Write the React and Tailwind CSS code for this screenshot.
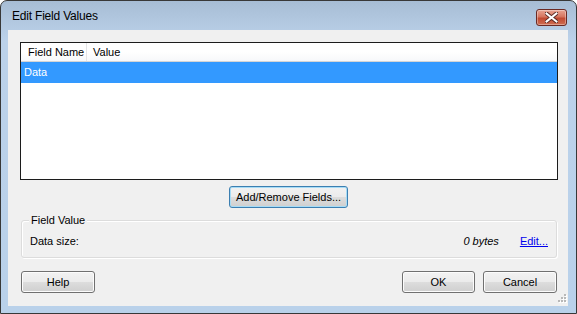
export default function App() {
  const font = { fontFamily: '"Liberation Sans", Arial, sans-serif' };
  const base =
    "flex items-center justify-center h-[22px] rounded-[3px] border bg-[linear-gradient(#f2f2f2_0%,#ebebeb_50%,#dddddd_50%,#cfcfcf_100%)] text-[11px] text-black";
  const btn = base + " border-[#707070] shadow-[inset_0_0_0_1px_#fcfcfc]";
  const btnFocus = base + " border-[#3c7fb1] shadow-[inset_0_0_0_1px_#a6dcf6]";
  return (
    <div className="w-[577px] h-[314px] bg-white" style={font}>
      <div className="w-[577px] h-[314px] flex flex-col rounded-t-[7px] border border-[#383838] bg-[linear-gradient(#a7bdd5_0px,#bcd2ea_40px,#b9d1ea_100%)] overflow-hidden">
        {/* title bar */}
        <div className="h-[29px] flex items-start relative shrink-0">
          <div className="pl-[11px] pt-[8px] text-[12px] text-black leading-[14px] tracking-[-0.2px]">Edit Field Values</div>
          <div className="absolute left-[535px] top-[8px] w-[31px] h-[17px] rounded-[3px] border border-[#6b2a24] bg-[linear-gradient(#e8a493_0%,#d6755f_45%,#c14a32_55%,#cf6e52_100%)] flex items-center justify-center shadow-[inset_0_0_0_1px_rgba(255,255,255,0.35)]">
            <svg width="13" height="11" viewBox="0 0 13 11">
              <path d="M1.5 1.5 L11.5 9.5 M11.5 1.5 L1.5 9.5" stroke="#5a2a25" strokeWidth="4" strokeLinecap="square" />
              <path d="M1.5 1.5 L11.5 9.5 M11.5 1.5 L1.5 9.5" stroke="#ffffff" strokeWidth="2" strokeLinecap="square" />
            </svg>
          </div>
        </div>
        {/* client */}
        <div className="ml-[7px] w-[560px] h-[276px] bg-[#f0f0f0] relative flex flex-col px-[12px] pt-[12px] text-[11px]">
          {/* list box */}
          <div className="w-[538px] h-[138px] border border-[#1c1c1c] bg-white flex flex-col">
            <div className="h-[19px] flex border-b border-[#d5d5d5] bg-[linear-gradient(#ffffff_0%,#ffffff_50%,#f7f8fa_100%)] shrink-0">
              <div className="w-[66px] border-r border-[#e3e4e6] pl-[7px] flex items-center">Field Name</div>
              <div className="pl-[6px] flex items-center">Value</div>
            </div>
            <div className="h-[21px] bg-[#3399ff] text-white flex items-center pl-[3px]">Data</div>
          </div>
          {/* add/remove */}
          <div className="flex justify-start pl-[209px] mt-[6px]">
            <div className={btnFocus + " w-[119px]"}>Add/Remove Fields...</div>
          </div>
          {/* group box */}
          <div className="relative mt-[12px] ml-[1px] w-[536px] h-[38px] rounded-[3px] border border-[#dcdcdc] shadow-[inset_1px_1px_0_#ffffff,1px_1px_0_#ffffff]">
            <div className="absolute left-[7px] top-[-8px] px-[2px] bg-[#f0f0f0] leading-[14px]">Field Value</div>
            <div className="flex items-center h-full pl-[8px] pr-[8px] pt-[4px]">
              <span>Data size:</span>
              <span className="ml-auto italic mr-[21px]">0 bytes</span>
              <span className="text-[#0000ee] underline">Edit...</span>
            </div>
          </div>
          {/* bottom buttons */}
          <div className="flex mt-[13px] ml-[1px] w-[536px]">
            <div className={btn + " w-[74px]"}>Help</div>
            <div className="ml-auto flex gap-[8px]">
              <div className={btn + " w-[73px]"}>OK</div>
              <div className={btn + " w-[74px]"}>Cancel</div>
            </div>
          </div>
          {/* size grip */}
          <svg className="absolute right-[1px] bottom-[1px]" width="12" height="12" viewBox="0 0 12 12">
            {[[9, 1], [6, 4], [9, 4], [3, 7], [6, 7], [9, 7]].map(([x, y], i) => (
              <g key={i}>
                <rect x={x + 1} y={y + 1} width="2" height="2" fill="#ffffff" />
                <rect x={x} y={y} width="2" height="2" fill="#b8b8b8" />
              </g>
            ))}
          </svg>
        </div>
      </div>
    </div>
  );
}
